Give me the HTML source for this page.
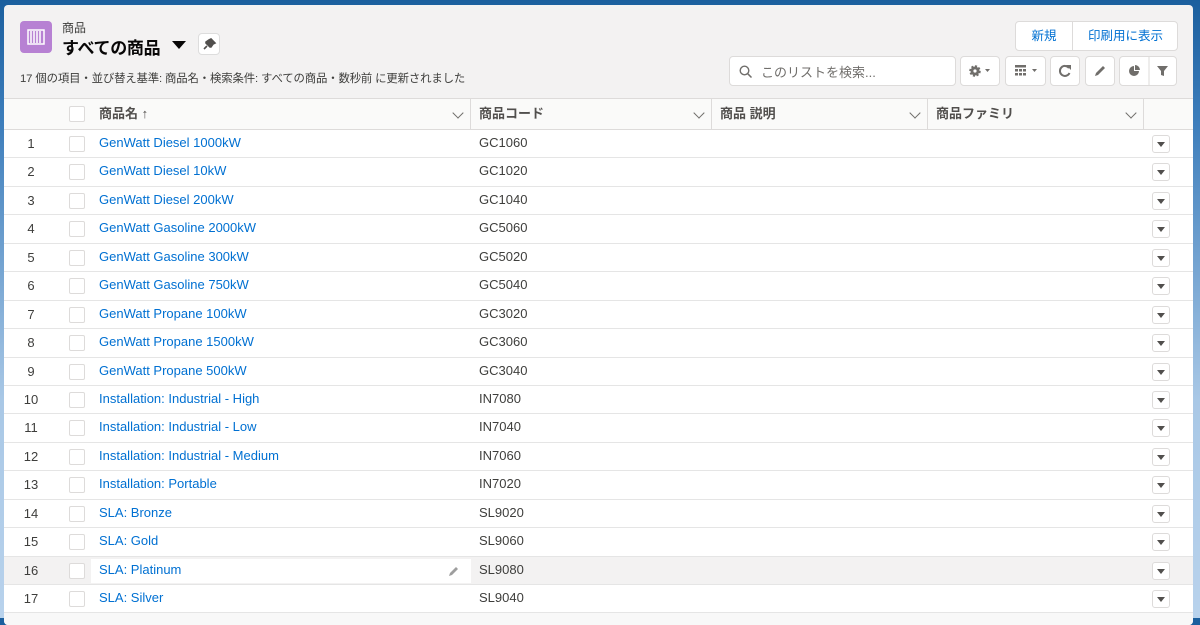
<!DOCTYPE html>
<html><head><meta charset="utf-8">
<style>
*{box-sizing:border-box;margin:0;padding:0}
body{width:1200px;height:618px;overflow:hidden;background:#1b5f9e;font-family:"Liberation Sans","Noto Sans CJK JP",sans-serif;font-size:13px;color:#3e3e3c;position:relative}
.bgl{position:absolute;left:0;top:0;width:1200px;height:618px;background:linear-gradient(#1b5f9e 0,#3c7dbb 120px,#a9c8e6 400px,#b8d2ec 618px)}
.panel{position:absolute;left:4px;top:5px;width:1189px;height:620px;background:#f3f2f2;border-radius:4px;overflow:hidden}
.icon{position:absolute;left:16px;top:16px;width:32px;height:32px;border-radius:4px;background:#b781d3}
.obj{position:absolute;left:58px;top:14px;font-size:12px;color:#3e3e3c}
.title{position:absolute;left:58px;top:29px;font-size:17px;font-weight:bold;color:#080707;letter-spacing:-0.3px}
.caret{position:absolute;left:168px;top:36px;width:0;height:0;border-left:7px solid transparent;border-right:7px solid transparent;border-top:8px solid #080707}
.pin{position:absolute;left:194px;top:28px;width:22px;height:22px;border:1px solid #ddd;border-radius:4px;background:#fff}
.info{position:absolute;left:16px;top:65px;font-size:11.4px;color:#3e3e3c;letter-spacing:-0.15px}
.btn{position:absolute;background:#fff;border:1px solid #dddbda;border-radius:4px}
.hdr{position:absolute;left:0;top:93px;width:1189px;height:32px;background:#fafaf9;border-top:1px solid #dddbda;border-bottom:1px solid #dddbda}
.hc{position:absolute;top:0;height:31px;line-height:30px;font-weight:bold;font-size:13px;color:#514f4d;padding-left:8px;border-right:1px solid #dddbda}
.chev{position:absolute;right:8px;top:10px;width:8px;height:8px;border-right:1.5px solid #706e6b;border-bottom:1.5px solid #706e6b;transform:rotate(45deg)}
.rows{position:absolute;left:0;top:125px;width:1189px}
.r{position:relative;height:28.44px;background:#fff;border-bottom:1px solid #e5e5e5}
.r.hl{background:#f3f2f2}
.n{position:absolute;left:0;width:54px;text-align:center;top:6px;color:#3e3e3c}
.cb{position:absolute;left:65px;top:6px;width:16px;height:16px;border:1px solid #dddbda;border-radius:2px;background:#fff}
.nm{position:absolute;left:95px;top:5px;color:#0070d2}
.cd{position:absolute;left:475px;top:5px;color:#3e3e3c}
.dd{position:absolute;left:1148px;top:5px;width:18px;height:18px;border:1px solid #dddbda;border-radius:3px;background:#fff}
.dd:after{content:"";position:absolute;left:4px;top:6px;border-left:4.5px solid transparent;border-right:4.5px solid transparent;border-top:5px solid #514f4d}
</style></head><body>
<div class="bgl"></div>
<div class="panel">
 <div class="icon"><svg width="32" height="32"><rect x="8" y="9" width="16" height="14" fill="none" stroke="#fff" stroke-width="1.5"/><g stroke="#fff" stroke-width="1.5"><line x1="11" y1="10" x2="11" y2="22"/><line x1="14" y1="10" x2="14" y2="22"/><line x1="17" y1="10" x2="17" y2="22"/><line x1="20" y1="10" x2="20" y2="22"/></g></svg></div>
 <div class="obj">商品</div>
 <div class="title">すべての商品</div>
 <div class="caret"></div>
 <div class="pin"><svg width="20" height="20"><path d="M12 5l4 4-2 1-2 3-1 0-4-4 0-1 3-2z M8 12l-3 3" stroke="#514f4d" stroke-width="1.6" fill="#514f4d"/></svg></div>
 <div class="info">17 個の項目・並び替え基準: 商品名・検索条件: すべての商品・数秒前 に更新されました</div>
 <div class="btn" style="left:1011px;top:16px;width:163px;height:30px;line-height:28px;font-size:12.5px"><span style="position:absolute;left:0;width:56px;text-align:center;top:0;color:#0070d2">新規</span><span style="position:absolute;left:56px;top:0;width:1px;height:28px;background:#dddbda"></span><span style="position:absolute;left:57px;width:105px;text-align:center;top:0;color:#0070d2">印刷用に表示</span></div>
 <div class="btn" style="left:725px;top:51px;width:227px;height:30px"><svg style="position:absolute;left:9px;top:8px" width="14" height="14"><circle cx="5.5" cy="5.5" r="4.3" fill="none" stroke="#706e6b" stroke-width="1.4"/><line x1="8.7" y1="8.7" x2="12.5" y2="12.5" stroke="#706e6b" stroke-width="1.5"/></svg><span style="position:absolute;left:31px;top:5px;color:#706e6b">このリストを検索...</span></div>
 <div class="btn" style="left:956px;top:51px;width:40px;height:30px"><svg width="40" height="28"><circle cx="14" cy="14" r="4.5" fill="#706e6b" stroke="#706e6b" stroke-width="2.5" stroke-dasharray="2 1.5"/><circle cx="14" cy="14" r="1.6" fill="#fff"/><path d="M24 12l5 0-2.5 3z" fill="#706e6b"/></svg></div>
 <div class="btn" style="left:1001px;top:51px;width:41px;height:30px"><svg width="40" height="28"><g fill="#706e6b"><rect x="9" y="8" width="11" height="2.5"/><rect x="9" y="12" width="3" height="2.5"/><rect x="13" y="12" width="3" height="2.5"/><rect x="17" y="12" width="3" height="2.5"/><rect x="9" y="16" width="3" height="2.5"/><rect x="13" y="16" width="3" height="2.5"/><rect x="17" y="16" width="3" height="2.5"/></g><path d="M26 12l5 0-2.5 3z" fill="#706e6b"/></svg></div>
 <div class="btn" style="left:1046px;top:51px;width:30px;height:30px"><svg width="28" height="28"><path d="M18 11a5 5 0 1 0 0.5 5" fill="none" stroke="#706e6b" stroke-width="2"/><path d="M15 8l5 0 0 5z" fill="#706e6b"/></svg></div>
 <div class="btn" style="left:1081px;top:51px;width:30px;height:30px"><svg width="28" height="28"><path d="M9 19l1-3 7-7 2 2-7 7z" fill="#706e6b"/></svg></div>
 <div class="btn" style="left:1115px;top:51px;width:58px;height:30px"><svg width="58" height="28"><path d="M14 9a5 5 0 1 0 5 5l-5 0z" fill="#706e6b"/><path d="M15 8a5 5 0 0 1 5 5l-5 0z" fill="#706e6b"/><line x1="29" y1="0" x2="29" y2="28" stroke="#dddbda"/><path d="M37 9l11 0-4 5 0 5-3-1 0-4z" fill="#706e6b"/></svg></div>
 <div class="hdr">
  <div class="cb" style="top:7px"></div>
  <div class="hc" style="left:87px;width:380px">商品名 <span style="font-size:13px">↑</span><i class="chev"></i></div>
  <div class="hc" style="left:467px;width:241px">商品コード<i class="chev"></i></div>
  <div class="hc" style="left:708px;width:216px">商品 説明<i class="chev"></i></div>
  <div class="hc" style="left:924px;width:216px">商品ファミリ<i class="chev"></i></div>
 </div>
 <div class="rows">
  <div class="r"><span class="n">1</span><i class="cb"></i><span class="nm">GenWatt Diesel 1000kW</span><span class="cd">GC1060</span><i class="dd"></i></div>
  <div class="r"><span class="n">2</span><i class="cb"></i><span class="nm">GenWatt Diesel 10kW</span><span class="cd">GC1020</span><i class="dd"></i></div>
  <div class="r"><span class="n">3</span><i class="cb"></i><span class="nm">GenWatt Diesel 200kW</span><span class="cd">GC1040</span><i class="dd"></i></div>
  <div class="r"><span class="n">4</span><i class="cb"></i><span class="nm">GenWatt Gasoline 2000kW</span><span class="cd">GC5060</span><i class="dd"></i></div>
  <div class="r"><span class="n">5</span><i class="cb"></i><span class="nm">GenWatt Gasoline 300kW</span><span class="cd">GC5020</span><i class="dd"></i></div>
  <div class="r"><span class="n">6</span><i class="cb"></i><span class="nm">GenWatt Gasoline 750kW</span><span class="cd">GC5040</span><i class="dd"></i></div>
  <div class="r"><span class="n">7</span><i class="cb"></i><span class="nm">GenWatt Propane 100kW</span><span class="cd">GC3020</span><i class="dd"></i></div>
  <div class="r"><span class="n">8</span><i class="cb"></i><span class="nm">GenWatt Propane 1500kW</span><span class="cd">GC3060</span><i class="dd"></i></div>
  <div class="r"><span class="n">9</span><i class="cb"></i><span class="nm">GenWatt Propane 500kW</span><span class="cd">GC3040</span><i class="dd"></i></div>
  <div class="r"><span class="n">10</span><i class="cb"></i><span class="nm">Installation: Industrial - High</span><span class="cd">IN7080</span><i class="dd"></i></div>
  <div class="r"><span class="n">11</span><i class="cb"></i><span class="nm">Installation: Industrial - Low</span><span class="cd">IN7040</span><i class="dd"></i></div>
  <div class="r"><span class="n">12</span><i class="cb"></i><span class="nm">Installation: Industrial - Medium</span><span class="cd">IN7060</span><i class="dd"></i></div>
  <div class="r"><span class="n">13</span><i class="cb"></i><span class="nm">Installation: Portable</span><span class="cd">IN7020</span><i class="dd"></i></div>
  <div class="r"><span class="n">14</span><i class="cb"></i><span class="nm">SLA: Bronze</span><span class="cd">SL9020</span><i class="dd"></i></div>
  <div class="r"><span class="n">15</span><i class="cb"></i><span class="nm">SLA: Gold</span><span class="cd">SL9060</span><i class="dd"></i></div>
  <div class="r hl"><span class="n">16</span><i class="cb"></i><span style="position:absolute;left:87px;top:2px;width:380px;height:24px;background:#fff"></span><span class="nm">SLA: Platinum</span><svg style="position:absolute;left:443px;top:7px" width="14" height="14"><path d="M2 12l1-3 6-6 2 2-6 6z" fill="#9e9e9e"/></svg><span class="cd">SL9080</span><i class="dd"></i></div>
  <div class="r"><span class="n">17</span><i class="cb"></i><span class="nm">SLA: Silver</span><span class="cd">SL9040</span><i class="dd"></i></div>
  <div class="r" style="background:#f8f8f8"></div>
 </div>
</div>
</body></html>
